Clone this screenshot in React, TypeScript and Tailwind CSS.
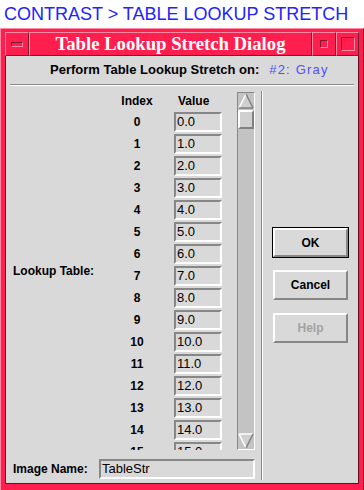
import React from "react"

const rows = Array.from({ length: 16 }, (_, i) => i)

function Bevel({ className = "", children }: { className?: string; children?: React.ReactNode }) {
    // raised piece of the red window frame
    return (
        <div className={`border-t border-l border-t-[#ff8aa3] border-l-[#ff8aa3] border-b border-r border-b-[#7d1a2e] border-r-[#7d1a2e] bg-[#ff1f4f] ${className}`}>
            {children}
        </div>
    )
}

function Field({ value, className = "" }: { value: string; className?: string }) {
    return (
        <div className={`h-[20px] bg-[#d9d9d9] border-2 border-t-[#878787] border-l-[#878787] border-b-white border-r-white flex items-center pl-[1px] text-[13px] text-black ${className}`}>
            {value}
        </div>
    )
}

function Scrollbar() {
    return (
        <div className="w-[18px] h-[358px] border border-t-[#878787] border-l-[#878787] border-b-white border-r-white bg-[#c3c3c3] flex flex-col justify-between">
            <div>
                <svg width="16" height="16" viewBox="0 0 16 16" className="block">
                    <polygon points="8,1 1,15 15,15" fill="#d0d0d0" />
                    <line x1="8" y1="1" x2="1" y2="15" stroke="#ffffff" strokeWidth="1.5" />
                    <line x1="8" y1="1" x2="15" y2="15" stroke="#808080" strokeWidth="1.5" />
                    <line x1="1" y1="15" x2="15" y2="15" stroke="#808080" strokeWidth="1.5" />
                </svg>
                <div className="mt-[1px] h-[19px] w-[16px] bg-[#d0d0d0] border-2 border-t-white border-l-white border-b-[#808080] border-r-[#808080]" />
            </div>
            <svg width="16" height="16" viewBox="0 0 16 16" className="block">
                <polygon points="1,1 15,1 8,15" fill="#d0d0d0" />
                <line x1="1" y1="1" x2="15" y2="1" stroke="#ffffff" strokeWidth="1.5" />
                <line x1="1" y1="1" x2="8" y2="15" stroke="#ffffff" strokeWidth="1.5" />
                <line x1="15" y1="1" x2="8" y2="15" stroke="#808080" strokeWidth="1.5" />
            </svg>
        </div>
    )
}

function Button({ label, disabled, isDefault }: { label: string; disabled?: boolean; isDefault?: boolean }) {
    const inner = (
        <div className={`h-full w-full bg-[#d9d9d9] border-2 border-t-white border-l-white border-b-[#878787] border-r-[#878787] flex items-center justify-center text-[12px] font-bold ${disabled ? "text-[#a3a3a3]" : "text-black"}`}>
            {label}
        </div>
    )
    if (isDefault) {
        return <div className="w-[77px] h-[31px] border border-black">{inner}</div>
    }
    return <div className="w-[75px] h-[30px]">{inner}</div>
}

export default function App() {
    return (
        <div className="w-[364px] h-[490px] bg-white overflow-hidden font-['Liberation_Sans',Arial,sans-serif]">
            {/* page heading */}
            <div className="h-[28px] pl-[4px] pt-[3px] text-[18px] leading-[22px] text-[#2222ff]">
                CONTRAST &gt; TABLE LOOKUP STRETCH
            </div>

            {/* window frame */}
            <div className="h-[462px] bg-[#ff1f4f] border-t border-l border-t-[#ff8aa3] border-l-[#ff8aa3] border-r border-r-[#7d1a2e] pt-[3px] pl-[4px] pr-[4px] flex flex-col">
                {/* title bar */}
                <div className="h-[24px] flex">
                    <Bevel className="w-[24px] h-[24px] flex items-center justify-center">
                        <div className="w-[12px] h-[5px] border border-t-[#7d1a2e] border-l-[#7d1a2e] border-b-[#ff8aa3] border-r-[#ff8aa3]" />
                    </Bevel>
                    <Bevel className="w-[283px] h-[24px] flex items-center justify-center">
                        <span className="font-['Liberation_Serif',serif] font-bold text-[18.7px] leading-none text-white">
                            Table Lookup Stretch Dialog
                        </span>
                    </Bevel>
                    <Bevel className="w-[24px] h-[24px] flex items-center justify-center">
                        <div className="w-[8px] h-[8px] border border-t-[#7d1a2e] border-l-[#7d1a2e] border-b-[#ff8aa3] border-r-[#ff8aa3]" />
                    </Bevel>
                    <Bevel className="w-[23px] h-[24px] flex items-center justify-center">
                        <div className="w-[14px] h-[14px] border border-t-[#7d1a2e] border-l-[#7d1a2e] border-b-[#ff8aa3] border-r-[#ff8aa3]" />
                    </Bevel>
                </div>

                {/* dialog body */}
                <div className="h-[428px] bg-[#d9d9d9] border-x border-b border-[#5e1020] flex flex-col">
                    <div className="h-[28px] flex items-center pl-[44px] gap-[10px] text-[13px]">
                        <span className="font-bold text-black">Perform Table Lookup Stretch on:</span>
                        <span className="text-[#4f4fff] tracking-[1.2px]">#2: Gray</span>
                    </div>
                    <div className="mx-[4px] h-[2px] border-t border-t-[#8a8a8a] border-b border-b-white" />

                    <div className="flex-1 flex">
                        {/* left: table + image name */}
                        <div className="w-[255px] pt-[6px] flex flex-col">
                            <div className="h-[358px] flex items-center">
                                <div className="w-[101px] pl-[7px] text-[12px] font-bold text-black">Lookup Table:</div>
                                <div className="h-[358px] overflow-hidden flex flex-col gap-[2px]">
                                    <div className="h-[18px] flex items-center text-[12px] font-bold text-black">
                                        <div className="w-[60px] text-center">Index</div>
                                        <div className="ml-[7px] w-[48px] pl-[4px]">Value</div>
                                    </div>
                                    {rows.map((i) => (
                                        <div key={i} className="h-[20px] shrink-0 flex items-center">
                                            <div className="w-[60px] text-center text-[12px] font-bold text-black">{i}</div>
                                            <Field value={`${i}.0`} className="ml-[7px] w-[48px]" />
                                        </div>
                                    ))}
                                </div>
                                <div className="ml-[15px]">
                                    <Scrollbar />
                                </div>
                            </div>
                            <div className="mt-[9px] h-[20px] flex items-center">
                                <div className="w-[93px] pl-[7px] text-[12px] font-bold text-black">Image Name:</div>
                                <Field value="TableStr" className="w-[156px]" />
                            </div>
                        </div>

                        <div className="mt-[5px] h-[389px] w-[2px] border-l border-l-[#8a8a8a] border-r border-r-white" />

                        {/* right: buttons */}
                        <div className="flex-1 pt-[141px] flex flex-col items-center">
                            <Button label="OK" isDefault />
                            <div className="mt-[12px]">
                                <Button label="Cancel" />
                            </div>
                            <div className="mt-[13px]">
                                <Button label="Help" disabled />
                            </div>
                        </div>
                    </div>
                </div>
            </div>
        </div>
    )
}
